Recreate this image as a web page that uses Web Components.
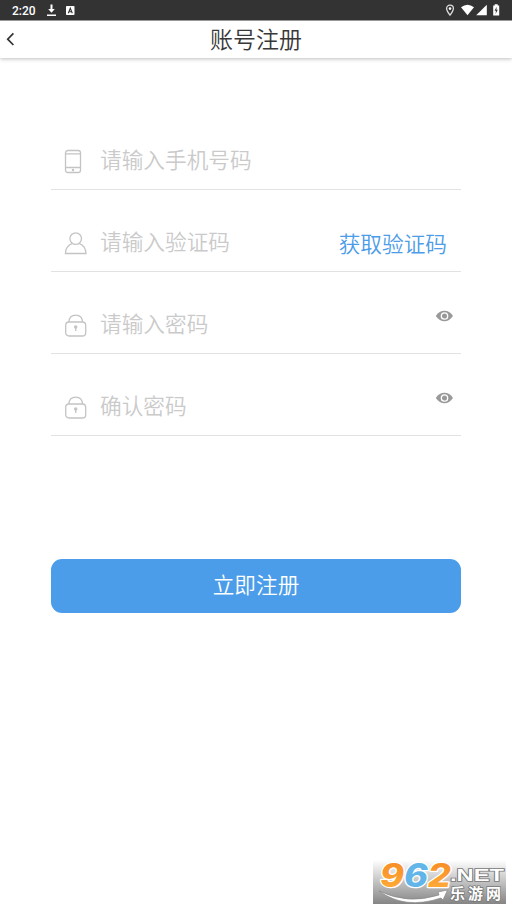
<!DOCTYPE html>
<html lang="zh-CN">
<head>
<meta charset="utf-8">
<title>账号注册</title>
<style>
html, body { margin: 0; height: 100%; }
body { background: #fff; font-family: "Noto Sans CJK SC", sans-serif; overflow: hidden; }
</style>
</head>
<body>
<register-page></register-page>
<script>
const define = (name, html) => customElements.define(name, class extends HTMLElement {
  constructor() {
    super();
    const t = document.createElement('template');
    t.innerHTML = html;
    this.attachShadow({ mode: 'open' }).append(t.content.cloneNode(true));
  }
});

define('status-bar', `
<style>
:host { display: flex; box-sizing: border-box; height: 21px; background: #333; border-bottom: 1px solid #999; color: #fff; font: 500 12px/22px Roboto, sans-serif; position: relative; z-index: 1; }
.time { padding-left: 12px; width: 34px; }
svg { flex: 1; height: 20px; display: block; }
</style>
<span class="time">2:20</span>
<svg viewBox="46 0 466 20" fill="#fff">
  <path d="M50.500 4.500h2v4.500h2.300l-3.300 3.800-3.300-3.800h2.300zM47 14.600h9v1.400h-9z"/>
  <rect x="66" y="6" width="8.500" height="9" rx=".8"/>
  <path d="M68.300 13.300l2-5 2 5M69.200 11.700h2.200" fill="none" stroke="#333" stroke-width="1.100"/>
  <path d="M450 15.200c-2.200-2.800-3.400-4.500-3.400-6.600a3.400 3.400 0 0 1 6.800 0c0 2.100-1.200 3.800-3.400 6.600z" fill="none" stroke="#ddd" stroke-width="1.300"/>
  <circle cx="450" cy="8.600" r="1.300"/>
  <path d="M461 7.200q6.500-5 13 0L467.500 15.200z"/>
  <path d="M486.800 4.700v10.500h-10.600z"/>
  <path d="M494.700 4.200h3v1.200h1.500v10h-6v-10h1.500z"/>
  <path d="M496.700 6.800l-2.200 4h1.500l-.5 3.100 2.300-4.200h-1.400z" fill="#333"/>
</svg>`);

define('title-bar', `
<style>
:host { display: grid; grid-template-columns: 40px 1fr 40px; height: 37px; background: #fff; box-shadow: 0 1px 4px rgba(0,0,0,.26); color: #383838; }
svg { width: 40px; height: 37px; }
h1 { margin: 0; text-align: center; font-size: 23px; font-weight: 350; line-height: 34px; }
</style>
<svg viewBox="0 21 40 37" fill="none" stroke="#333" stroke-width="1.700"><path d="M13.400 33.400L7.700 39.200l5.700 5.800"/></svg>
<h1><slot></slot></h1>`);

const icons = {
  phone: '<rect x="1.500" y="1.500" width="15" height="22" rx="2.300"/><path d="M1.500 4.900h15M1.500 18.500h15"/><circle cx="9" cy="21" r=".6"/>',
  user: '<circle cx="11.700" cy="7.600" r="5.800"/><path d="M8.300 12.300C4 14 1.600 17.300 1.400 22.500h20.600c-.2-5.200-2.600-8.500-6.900-10.200"/>',
  lock: '<rect x="1.700" y="9" width="20" height="14" rx="3.300"/><path d="M4.800 9C5.200 4.800 8 2.200 11.700 2.200S18.200 4.800 18.600 9M11.700 14v4"/><circle cx="11.700" cy="14" r="1.100" fill="#c4c4c4"/>'
};
customElements.define('form-field', class extends HTMLElement {
  constructor() {
    super();
    this.attachShadow({ mode: 'open' }).innerHTML = `
<style>
:host { display: flex; box-sizing: border-box; height: 82px; padding: 40px 0 0 13px; border-bottom: 1px solid #e2e2e2; color: #cacaca; }
svg { width: 24px; height: 26px; flex: none; margin-top: 1px; }
.label { margin: -6px 0 0 12px; flex: 1; font-size: 21.670px; line-height: 33px; font-weight: 350; white-space: nowrap; }
</style>
<svg viewBox="0 0 24 26" fill="none" stroke="#c4c4c4" stroke-width="1.300">${icons[this.getAttribute('icon')]}</svg>
<span class="label"><slot></slot></span><slot name="action"></slot>`;
  }
});

define('code-button', `
<style>:host { display: block; margin: -4px 14px 0 0; color: #4c9ce8; font-size: 21.670px; line-height: 33px; font-weight: 350; }</style><slot></slot>`);

define('eye-toggle', `
<style>:host { display: block; margin: -3px 8px 0 0; } svg { display: block; width: 18px; height: 14px; }</style>
<svg viewBox="0 0 18 14"><path d="M.8 7C3.200 3.300 6 1.800 9.500 1.800S15.500 3.300 18 7C15.500 10.700 12.700 12.200 9.500 12.200S3.200 10.700.8 7z" fill="#999"/><circle cx="9.500" cy="7" r="3.200" fill="#999" stroke="#fff" stroke-width="1.300"/></svg>`);

define('submit-button', `
<style>:host { display: block; height: 54px; border-radius: 11px; background: #4c9de9; color: #fff; text-align: center; font-size: 21.670px; line-height: 49px; font-weight: 350; }</style><slot></slot>`);

define('site-mark', `
<style>:host { display: block; width: 133px; height: 44px; } svg { display: block; }</style>
<svg width="133" height="44" viewBox="0 0 133 44">
  <defs>
    <linearGradient id="g" x2="0" y2="1"><stop stop-color="#fff"/><stop offset="1" stop-color="#858585"/></linearGradient>
    <linearGradient id="o" x2="0" y2="1"><stop stop-color="#f68622"/><stop offset="1" stop-color="#ffb13c"/></linearGradient>
  </defs>
  <rect width="133" height="44" fill="url(#g)"/>
  <path d="M6 31Q35 45 66 35l-1-3 9.500-2-4.500 10-2-2Q32 50 6 31z" fill="#fff" stroke="#888" stroke-width=".7"/>
  <text x="7" y="26.500" font-family="Inter, sans-serif" font-size="32" font-weight="800" font-style="italic" textLength="71" lengthAdjust="spacingAndGlyphs" fill="url(#o)" stroke="#fff" stroke-width="2.500" stroke-linejoin="round" paint-order="stroke">9<tspan fill="#62b5e8">6</tspan>2</text>
  <g fill="#fff" stroke="#777" stroke-width="1.500" paint-order="stroke" font-weight="700">
    <text x="77" y="20.500" font-family="Liberation Sans, sans-serif" font-size="17" textLength="54" lengthAdjust="spacingAndGlyphs">.NET</text>
    <text x="77" y="38.500" font-family="Noto Sans CJK SC, sans-serif" font-size="15" textLength="51">乐游网</text>
  </g>
</svg>`);

define('register-page', `
<style>
:host { display: flex; flex-direction: column; height: 904px; }
form { margin: 50px 51px 0; }
submit-button { margin-top: 123px; }
site-mark { margin: auto 6px 0 auto; }
</style>
<status-bar></status-bar>
<title-bar>账号注册</title-bar>
<form>
  <form-field icon="phone">请输入手机号码</form-field>
  <form-field icon="user">请输入验证码<code-button slot="action">获取验证码</code-button></form-field>
  <form-field icon="lock">请输入密码<eye-toggle slot="action"></eye-toggle></form-field>
  <form-field icon="lock">确认密码<eye-toggle slot="action"></eye-toggle></form-field>
  <submit-button>立即注册</submit-button>
</form>
<site-mark></site-mark>`);
</script>
</body>
</html>
